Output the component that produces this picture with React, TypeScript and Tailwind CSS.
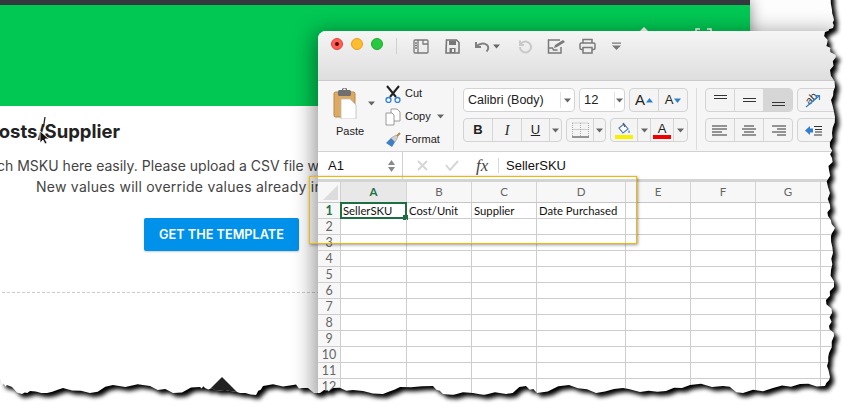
import type { ReactNode } from "react";

const rightEdge: [number, number][] = [
  [830, -10], [832, 10], [834, 20], [833, 28], [825, 32], [827, 44], [830, 50], [836, 57], [830, 70], [835, 87], [831, 100], [835, 117], [832, 133], [830, 147], [832, 158], [829, 170], [828, 187], [830, 205], [828, 216], [835, 228], [831, 236], [833, 253], [831, 270], [834, 287], [826, 300], [832, 313], [829, 326], [834, 336], [829, 353], [827, 366], [830, 377], [825, 386],
];
const bottomEdge: [number, number][] = [
  [800, 384], [773, 388], [743, 393], [723, 386], [690, 385], [666, 391], [640, 392], [623, 388], [596, 393], [569, 385], [537, 393], [526, 386], [506, 394], [473, 393], [443, 394], [433, 386], [400, 387], [383, 394], [353, 390], [333, 388], [320, 393], [302, 388], [293, 385], [263, 386], [256, 395], [240, 393], [230, 391], [215, 390], [205, 388], [200, 387], [173, 393], [150, 386], [113, 385], [90, 393], [63, 388], [47, 393], [30, 391], [22, 394], [7, 385], [2, 385], [-10, 340], [-10, -10],
];

// rough up the torn edge a little between the hand-placed points
function tornPath() {
  const pts = [...rightEdge, ...bottomEdge];
  let d = `M${pts[0][0]} ${pts[0][1]}`;
  pts.slice(1).forEach(([x, y], i) => {
    const [px, py] = pts[i];
    for (let s = 1; s <= 3; s++) {
      const t = s / 3;
      const n = s === 3 ? 0 : Math.sin((i + 1) * 12.9 + s * 78.2) * 1.6;
      const nx = px + (x - px) * t + (i < rightEdge.length - 1 ? n : 0);
      const ny = py + (y - py) * t + (i < rightEdge.length - 1 ? 0 : n);
      d += `L${nx.toFixed(1)} ${ny.toFixed(1)}`;
    }
  });
  return d + "Z";
}
const TORN = tornPath();

function TornEdge() {
  return (
    <svg className="absolute left-0 top-0 z-30" width="846" height="406" viewBox="0 0 846 406">
      <defs>
        <filter id="tornBlur" x="-5%" y="-5%" width="110%" height="110%">
          <feGaussianBlur stdDeviation="2.1" />
        </filter>
        <clipPath id="outside">
          <path clipRule="evenodd" d={`M-20 -20H866V426H-20Z ${TORN}`} />
        </clipPath>
      </defs>
      <path fill="#fff" fillRule="evenodd" d={`M-20 -20H866V426H-20Z ${TORN}`} />
      <g clipPath="url(#outside)">
        <path d={TORN} fill="#000" filter="url(#tornBlur)" transform="translate(4 4)" />
      </g>
    </svg>
  );
}

function Dot({ className, children }: { className: string; children?: ReactNode }) {
  return <div className={`flex h-3 w-3 items-center justify-center rounded-full ${className}`}>{children}</div>;
}

function Caret({ className = "" }: { className?: string }) {
  return (
    <svg width="7" height="5" viewBox="0 0 7 5" className={className}>
      <path d="M0 0.5h7L3.5 4.5z" fill="#666" />
    </svg>
  );
}

function TitleIcons() {
  return (
    <div className="ml-[16px] flex items-center">
      <svg width="16" height="15" viewBox="0 0 16 15" fill="none" stroke="#7a7a7a" strokeWidth="1.3" className="mr-[16px]">
        <rect x="1" y="1" width="14" height="13" rx="1" />
        <path d="M5 1v13M2 4h2M2 6.5h2M2 9h2" />
        <path d="M10 1v4h5" />
      </svg>
      <svg width="15" height="15" viewBox="0 0 15 15" className="mr-[14px]">
        <path d="M1.5 1h10l2.5 2.5V14H1z" fill="none" stroke="#777" strokeWidth="1.6" />
        <rect x="4" y="1.5" width="7" height="4.5" fill="#777" />
        <rect x="4.5" y="9" width="6" height="5" fill="#777" />
        <rect x="7" y="10" width="2" height="3" fill="#eee" />
      </svg>
      <svg width="16" height="13" viewBox="0 0 16 13" fill="none" stroke="#808080" strokeWidth="2" className="mr-[3px]">
        <path d="M2 2v5h5" />
        <path d="M2.5 6.5C5 3.5 10 2.5 13 5c2 1.800 1.500 4.500-.5 6.500" />
      </svg>
      <Caret className="mr-[18px]" />
      <svg width="14" height="15" viewBox="0 0 14 15" fill="none" stroke="#c9c9c9" strokeWidth="2" className="mr-[15px]">
        <path d="M2 8a5.500 5.500 0 1 0 2-4.200L2 5.500" />
        <path d="M2 1.500v4.500h4" />
      </svg>
      <svg width="19" height="15" viewBox="0 0 19 15" fill="none" stroke="#7a7a7a" strokeWidth="1.500" className="mr-[13px]">
        <path d="M13 1H1.500v13h12.500V8" />
        <path d="M1.500 9h4l1 2h4" />
        <path d="M7 9l1-3 8-5 2 2-8 5z" fill="#7a7a7a" stroke="none" />
      </svg>
      <svg width="17" height="16" viewBox="0 0 17 16" fill="none" stroke="#7a7a7a" strokeWidth="1.500" className="mr-[16px]">
        <path d="M4 5V1.500h9V5" />
        <rect x="1" y="5" width="15" height="6.500" rx="1.500" />
        <rect x="4" y="9.500" width="9" height="5.500" fill="#f0f0f0" />
      </svg>
      <svg width="9" height="8" viewBox="0 0 9 8">
        <path d="M0 0.500h9v1.200H0z" fill="#777" />
        <path d="M0 3.500h9L4.500 8z" fill="#777" />
      </svg>
    </div>
  );
}

function ClipboardGroup() {
  return (
    <div className="flex h-[62px] w-[136px] shrink-0 border-r border-[#dcdcdc] pl-[15px]">
      <div className="flex w-[44px] flex-col">
        <div className="flex items-start">
          <svg width="26" height="31" viewBox="0 0 26 31">
            <rect x="1" y="4" width="21" height="25" rx="1.500" fill="#dcaa63" stroke="#b98a49" />
            <rect x="5" y="2" width="13" height="6" rx="1.500" fill="#6f6f6f" />
            <rect x="9.500" y="0" width="4" height="4" rx="2" fill="none" stroke="#6f6f6f" strokeWidth="1.200" />
            <path d="M8 11h9l6 6v14H8z" fill="#fff" stroke="#bdbdbd" strokeWidth="0.800" />
          </svg>
          <Caret className="ml-[9px] mt-[13px]" />
        </div>
        <span className="ml-[3px] mt-[5px] text-[11px] leading-[15px] text-[#222]">Paste</span>
      </div>
      <div className="-mt-[4px] ml-[8px] flex flex-col gap-[4px] text-[11px] leading-[19px] text-[#222]">
        <div className="flex items-center">
          <svg width="16" height="18" viewBox="0 0 16 18" fill="none" className="mr-[4px]">
            <path d="M2 1l9 11M14 1L5 12" stroke="#222" strokeWidth="2" />
            <circle cx="3.500" cy="15" r="2.500" stroke="#2f7fd0" strokeWidth="1.300" />
            <circle cx="12.500" cy="15" r="2.500" stroke="#2f7fd0" strokeWidth="1.300" />
          </svg>
          Cut
        </div>
        <div className="flex items-center">
          <svg width="16" height="18" viewBox="0 0 16 18" fill="#fff" stroke="#9a9a9a" className="mr-[4px]">
            <path d="M6 1h6l3 3v9H6z" />
            <path d="M1 5h6l2 2v10H1z" />
          </svg>
          Copy
          <Caret className="ml-[6px]" />
        </div>
        <div className="flex items-center">
          <svg width="16" height="16" viewBox="0 0 16 16" className="mr-[4px]">
            <path d="M1 11l5-5 4 4-3 5z" fill="#3f7fc4" />
            <path d="M6 6l5-3 2 2-3 5z" fill="#cfcfcf" stroke="#888" strokeWidth="0.500" />
            <path d="M12 4l3-3" stroke="#b08a50" strokeWidth="2" />
          </svg>
          Format
        </div>
      </div>
    </div>
  );
}

function Seg({ className, children }: { className: string; children: ReactNode }) {
  return (
    <div className={`flex h-[24px] shrink-0 items-stretch divide-x divide-[#d5d5d5] overflow-hidden rounded-[4px] border border-[#d3d3d3] bg-[#f4f4f4] ${className}`}>
      {children}
    </div>
  );
}

function Cell({ className = "", children }: { className?: string; children?: ReactNode }) {
  return <div className={`flex items-center justify-center ${className}`}>{children}</div>;
}

function AlignLines({ w }: { w: [number, number, number, number] }) {
  const mode = w[1] === 15 ? "l" : w[0] === 10 ? "c" : "r";
  return (
    <svg width="16" height="11" viewBox="0 0 16 11" stroke="#333">
      {w.map((n, i) => {
        const x = mode === "l" ? 0 : mode === "r" ? 16 - n : (16 - n) / 2;
        return <path key={i} d={`M${x} ${1 + i * 3}h${n}`} />;
      })}
    </svg>
  );
}

function FontGroup() {
  return (
    <div className="ml-[9px] flex h-[62px] w-[234px] shrink-0 flex-col gap-[6px] border-r border-[#dcdcdc] font-[Arial,'Liberation_Sans',sans-serif] text-[#222]">
      <div className="flex gap-[4px]">
        <div className="flex h-[24px] w-[112px] items-center rounded-[4px] border border-[#d3d3d3] bg-white pl-[4px] text-[12.5px]">
          <span className="w-[92px]">Calibri (Body)</span>
          <div className="flex h-[16px] flex-1 items-center justify-center border-l border-[#e2e2e2]"><Caret /></div>
        </div>
        <div className="flex h-[24px] w-[46px] items-center rounded-[4px] border border-[#d3d3d3] bg-white pl-[4px] text-[13px]">
          <span className="w-[30px]">12</span>
          <div className="flex h-[16px] flex-1 items-center justify-center border-l border-[#e2e2e2]"><Caret /></div>
        </div>
        <Seg className="w-[59px]">
          <Cell className="w-[29px] gap-[1px] text-[15px]">A<svg width="7" height="5" viewBox="0 0 7 5"><path d="M0 4.500h7L3.500 0z" fill="#2f7fd0" /></svg></Cell>
          <Cell className="flex-1 gap-[1px] text-[13px]">A<svg width="7" height="5" viewBox="0 0 7 5"><path d="M0 .5h7L3.500 5z" fill="#2f7fd0" /></svg></Cell>
        </Seg>
      </div>
      <div className="flex gap-[4px]">
        <Seg className="w-[99px]">
          <Cell className="w-[29px] text-[13px] font-bold">B</Cell>
          <Cell className="w-[29px] text-[14px] italic font-['Liberation_Serif',serif]">I</Cell>
          <Cell className="w-[28px] text-[13px] underline">U</Cell>
          <Cell className="flex-1"><Caret /></Cell>
        </Seg>
        <Seg className="w-[40px]">
          <Cell className="w-[27px]">
            <svg width="17" height="16" viewBox="0 0 17 16" fill="none">
              <path d="M.5 1h16M.5 7.500h16M.5 1v14M8.500 1v14M16.500 1v14" stroke="#aaa" strokeDasharray="1 1" />
              <path d="M0 15h17" stroke="#333" />
            </svg>
          </Cell>
          <Cell className="flex-1"><Caret /></Cell>
        </Seg>
        <Seg className="w-[78px]">
          <Cell className="w-[27px] flex-col">
            <svg width="14" height="13" viewBox="0 0 14 13" fill="none">
              <path d="M2 6l5-4 4 5-5 4z" fill="#fff" stroke="#4d7fb8" strokeWidth="1.200" />
              <path d="M6 1l2 4" stroke="#555" strokeWidth="1.200" />
              <path d="M12 8c1 1.500 1 3 0 3s-1-1.500 0-3z" fill="#3f7fc4" />
            </svg>
            <div className="h-[4px] w-[18px] bg-[#f7f000]" />
          </Cell>
          <Cell className="w-[13px]"><Caret /></Cell>
          <Cell className="w-[23px] flex-col text-[13px] leading-[13px]">
            A
            <div className="h-[4px] w-[18px] bg-[#f00000]" />
          </Cell>
          <Cell className="flex-1"><Caret /></Cell>
        </Seg>
      </div>
    </div>
  );
}

function AlignGroup() {
  return (
    <div className="ml-[8px] flex flex-col gap-[6px]">
      <div className="flex gap-[4px]">
        <Seg className="w-[88px]">
          <Cell className="w-[29px] items-start pt-[6px]"><svg width="13" height="4" stroke="#333"><path d="M0 .5h13M0 3.500h13" /></svg></Cell>
          <Cell className="w-[29px]"><svg width="13" height="4" stroke="#333"><path d="M0 .5h13M0 3.500h13" /></svg></Cell>
          <Cell className="flex-1 items-end bg-[#d6d6d6] pb-[5px]"><svg width="13" height="4" stroke="#333"><path d="M0 .5h13M0 3.500h13" /></svg></Cell>
        </Seg>
        <Seg className="w-[50px]">
          <Cell className="relative w-[30px] text-[11px] text-[#333]">
            <span className="-translate-x-[2px] -translate-y-[2px] -rotate-45">ab</span>
            <svg className="absolute bottom-[3px] left-[7px]" width="16" height="14" viewBox="0 0 16 14" fill="none" stroke="#2f7fd0" strokeWidth="1.200">
              <path d="M1 13L14 2M10 1.500h4.500V6" />
            </svg>
          </Cell>
        </Seg>
      </div>
      <div className="flex gap-[4px]">
        <Seg className="w-[88px]">
          <Cell className="w-[29px]"><AlignLines w={[15, 15, 10, 15]} /></Cell>
          <Cell className="w-[29px]"><AlignLines w={[10, 14, 10, 14]} /></Cell>
          <Cell className="flex-1"><AlignLines w={[14, 9, 14, 9]} /></Cell>
        </Seg>
        <Seg className="w-[50px]">
          <Cell className="w-[30px]">
            <svg width="17" height="11" viewBox="0 0 17 11">
              <path d="M0 5.500L5 1v2.500h3v4H5V10z" fill="#2f7fd0" />
              <path d="M9 1.500h8M10 4.500h7M10 7h7M9 10h8" stroke="#333" />
            </svg>
          </Cell>
        </Seg>
      </div>
    </div>
  );
}

function FormulaBar() {
  return (
    <div className="flex h-[27px] items-center bg-white font-[Arial,'Liberation_Sans',sans-serif] text-[13px] text-[#111]">
      <div className="flex h-full w-[85px] items-center border-r border-[#d0d0d0] pl-[10px]">
        <span className="w-[60px]">A1</span>
        <div className="flex flex-col gap-[2px]">
          <svg width="7" height="5"><path d="M0 5h7L3.500 0z" fill="#8a8a8a" /></svg>
          <svg width="7" height="5"><path d="M0 0h7L3.500 5z" fill="#8a8a8a" /></svg>
        </div>
      </div>
      <svg width="11" height="11" viewBox="0 0 11 11" stroke="#d6d6d6" strokeWidth="2" className="ml-[14px]"><path d="M1 1l9 9M10 1l-9 9" /></svg>
      <svg width="14" height="11" viewBox="0 0 14 11" fill="none" stroke="#d6d6d6" strokeWidth="2" className="ml-[17px]"><path d="M1 5l4 5 8-9" /></svg>
      <span className="ml-[17px] w-[22px] font-['Liberation_Serif',serif] text-[17px] italic text-[#444]">fx</span>
      <div className="h-[15px] w-px bg-[#d8d8d8]" />
      <span className="ml-[7px]">SellerSKU</span>
    </div>
  );
}

const colWidths = ["w-[66px]", "w-[65px]", "w-[65px]", "w-[89px]", "w-[65px]", "w-[65px]", "w-[65px]"];
const letters = ["A", "B", "C", "D", "E", "F", "G"];
const firstRow = ["SellerSKU", "Cost/Unit", "Supplier", "Date Purchased", "", "", ""];
const rows = [1, 2, 3, 4, 5, 6, 7, 8, 9, 10, 11, 12];

function Sheet() {
  return (
    <div className="border-t-[3px] border-[#d4d4d4] font-['Lato',sans-serif] text-[#111]">
      <div className="flex h-[21px] border-b border-[#c6c6c6] bg-[#f7f7f7] text-[11.5px] text-[#666]">
        <div className="flex w-[23px] shrink-0 items-end justify-end border-r border-[#cfcfcf] pb-[2px] pr-[2px]">
          <svg width="15" height="15"><path d="M15 0v15H0z" fill="#dcdcdc" /></svg>
        </div>
        {letters.map((l, i) => (
          <div
            key={l}
            className={`flex shrink-0 items-center justify-center border-r border-[#d4d4d4] ${colWidths[i]} ${i === 0 ? "bg-[#e8e8e8] font-bold text-[#1f7246]" : ""}`}
          >
            {l}
          </div>
        ))}
      </div>
      {rows.map((r) => (
        <div key={r} className="flex h-[16px] border-b border-[#cdcdcd] text-[11.3px] leading-[15px]">
          <div
            className={`flex w-[23px] shrink-0 items-center justify-center border-r border-[#cdcdcd] bg-[#f7f7f7] text-[12.5px] ${r === 1 ? "bg-[#e8e8e8] font-bold text-[#1f7246]" : "text-[#666]"}`}
          >
            {r}
          </div>
          {colWidths.map((w, i) => (
            <div key={i} className={`relative shrink-0 whitespace-nowrap border-r border-[#cdcdcd] pl-[2px] ${w}`}>
              {r === 1 ? firstRow[i] : ""}
              {r === 1 && i === 0 && (
                <div className="absolute -left-px -top-[1px] h-[17px] w-[67px] border-2 border-[#1f6e43]">
                  <div className="absolute -bottom-[3px] -right-[3px] h-[5px] w-[5px] bg-[#1f6e43]" />
                </div>
              )}
            </div>
          ))}
        </div>
      ))}
    </div>
  );
}

function ExcelWindow() {
  return (
    <div className="absolute left-[318px] top-[31px] z-10 h-[375px] w-[528px] overflow-hidden rounded-t-[8px] bg-white font-[Arial,'Liberation_Sans',sans-serif] shadow-[-4px_2px_22px_rgba(0,0,0,0.42)]">
      <div className="flex h-[50px] items-start border-b border-[#c9c9c9] bg-gradient-to-b from-[#f5f5f5] to-[#dedede] pl-[13px] pt-[7px]">
        <div className="flex items-center gap-[8px]">
          <Dot className="border border-[#e0443e] bg-[#ff5f57]"><div className="h-[4px] w-[4px] rounded-full bg-[#5a0a06]" /></Dot>
          <Dot className="border border-[#dea123] bg-[#febc2e]" />
          <Dot className="border border-[#1aab29] bg-[#28c840]" />
        </div>
        <div className="ml-[13px] h-[16px] w-px bg-[#d0d0d0]" />
        <TitleIcons />
      </div>
      <div className="flex h-[71px] items-start border-b border-[#d2d2d2] bg-[#f6f6f6] pt-[7px]">
        <ClipboardGroup />
        <FontGroup />
        <AlignGroup />
      </div>
      <FormulaBar />
      <Sheet />
    </div>
  );
}

function WebPage() {
  return (
    <div className="absolute left-0 top-0 h-[406px] w-[750px] overflow-hidden bg-white font-['Inter',sans-serif] shadow-[0_0_14px_rgba(0,0,0,0.45)]">
      <div className="h-[5px] bg-[#35383c]" />
      <div className="relative h-[101px] bg-[#00c853]">
        <svg className="absolute left-[638px] top-[22px]" width="12" height="6"><path d="M0 6L6 0l6 6z" fill="#fff" /></svg>
        <svg className="absolute left-[695px] top-[23px]" width="17" height="6" fill="none" stroke="#fff" strokeWidth="1.500"><path d="M1 6V1h4M12 1h4v5" /></svg>
      </div>
      <h1 className="ml-[-15px] mt-[14px] whitespace-nowrap text-[18.5px] font-bold leading-[22px] text-[#222]">Costs/Supplier</h1>
      <p className="ml-[-3px] mt-[13px] whitespace-nowrap text-[14px] leading-[21px] text-[#444]">ch MSKU here easily. Please upload a CSV file w</p>
      <p className="ml-[36px] whitespace-nowrap text-[14px] leading-[21px] tracking-[0.25px] text-[#444]">New values will override values already in</p>
      <button className="ml-[144px] mt-[21px] block h-[33px] w-[155px] rounded-[2px] bg-[#0091ea] text-[12.7px] font-semibold text-white shadow-[0_1px_2px_rgba(0,0,0,0.2)]">
        GET THE TEMPLATE
      </button>
      <div className="ml-[2px] mt-[41px] border-t border-dashed border-[#cccccc]" />
      <svg className="absolute left-[204px] top-[377px]" width="36" height="18"><path d="M0 18L18 0l18 18z" fill="#222" /></svg>
      <svg className="absolute left-[39px] top-[116px]" width="16" height="30" viewBox="0 0 16 30">
        <path d="M6 1L4.500 11" stroke="#222" strokeWidth="1.300" fill="none" />
        <path d="M1 15v12l3-3 2 4 2-1-2-4h4z" fill="#111" stroke="#fff" strokeWidth="0.800" />
      </svg>
    </div>
  );
}

export default function App() {
  return (
    <div className="relative h-[406px] w-[846px] overflow-hidden bg-[#fdfdfd]">
      <WebPage />
      <ExcelWindow />
      {/* yellow callout round the header row */}
      <div className="absolute left-[309px] top-[176px] z-20 h-[68px] w-[328px] border-[1.5px] border-[#f2b705] shadow-[1px_1px_3px_rgba(0,0,0,0.4)]" />
      <TornEdge />
    </div>
  );
}
